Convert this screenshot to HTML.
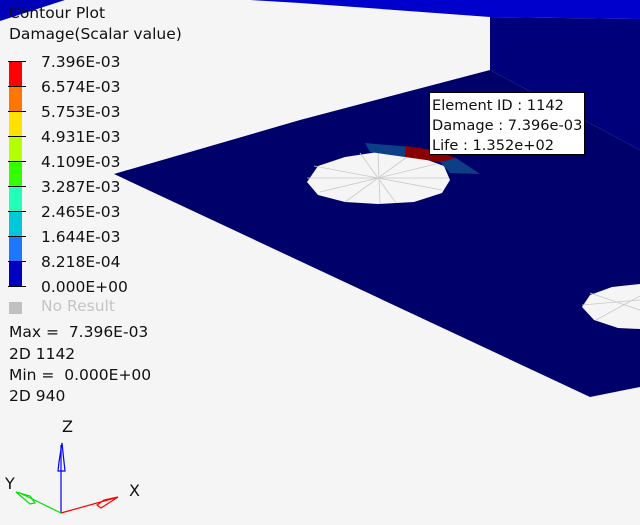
<!DOCTYPE html>
<html><head><meta charset="utf-8"><style>
html,body{margin:0;padding:0;background:#f5f5f5;width:640px;height:525px;overflow:hidden}
svg{display:block}
text{font-family:"DejaVu Sans","Liberation Sans",sans-serif;font-size:15.5px;fill:#111}
.tt{font-size:14.6px}
</style></head><body>
<svg width="640" height="525" viewBox="0 0 640 525">
<rect width="640" height="525" fill="#f5f5f5"/>
<polygon points="250,0 640,0 640,19 490,17 300,3" fill="#0000cc"/>
<polygon points="0,0 65,0 0,21" fill="#0000b8"/>
<polygon points="490,17 640,19 640,150 490,70" fill="#00007a"/>
<polygon points="114,174 300,120 490,70 640,150 640,387 590,397" fill="#00006a"/>
<polygon points="307,182 318,166 345,157 378,152 414,155 444,166 450,180 442,193 414,202 378,204 345,202 318,195" fill="#f5f5f5"/>
<g stroke="#c8c8c8" stroke-width="0.8">
<line x1="307" y1="178" x2="449" y2="178"/><line x1="360" y1="153" x2="396" y2="203"/>
<line x1="345" y1="202" x2="411" y2="154"/><line x1="314" y1="166" x2="442" y2="190"/>
<line x1="320" y1="192" x2="436" y2="164"/><line x1="378" y1="152" x2="380" y2="204"/>
</g>
<polygon points="365,143 412,147 405,157 370,152" fill="#0d3f86"/>
<polygon points="406,146 432,150 456,158 440,162 405,157" fill="#8a0000"/>
<polygon points="440,162 456,158 480,174 450,173" fill="#0d3f86"/>
<polygon points="582,307 590,295 612,287 640,284 640,329 618,328 594,320" fill="#f5f5f5"/>
<g stroke="#c8c8c8" stroke-width="0.8">
<line x1="582" y1="305" x2="640" y2="300"/><line x1="590" y1="293" x2="640" y2="310"/><line x1="596" y1="320" x2="640" y2="296"/>
</g>
<rect x="429.5" y="92.5" width="155" height="62" fill="#fff" stroke="#000"/>
<text class="tt" x="432" y="110">Element ID : 1142</text>
<text class="tt" x="432" y="130">Damage : 7.396e-03</text>
<text class="tt" x="432" y="150">Life : 1.352e+02</text>
<text x="9" y="18">Contour Plot</text>
<text x="9" y="39">Damage(Scalar value)</text>
<rect x="9" y="61" width="13" height="25" fill="#ff0000"/>
<rect x="9" y="86" width="13" height="25" fill="#ff7700"/>
<rect x="9" y="111" width="13" height="25" fill="#ffe000"/>
<rect x="9" y="136" width="13" height="25" fill="#b4ff00"/>
<rect x="9" y="161" width="13" height="25" fill="#33ff00"/>
<rect x="9" y="186" width="13" height="25" fill="#22ffbb"/>
<rect x="9" y="211" width="13" height="25" fill="#00c8d8"/>
<rect x="9" y="236" width="13" height="25" fill="#1e78ff"/>
<rect x="9" y="261" width="13" height="25" fill="#0000c0"/>
<g stroke="#000" stroke-width="1">
<line x1="8" y1="61.5" x2="26" y2="61.5"/><line x1="8" y1="86.5" x2="26" y2="86.5"/><line x1="8" y1="111.5" x2="26" y2="111.5"/>
<line x1="8" y1="136.5" x2="26" y2="136.5"/><line x1="8" y1="161.5" x2="26" y2="161.5"/><line x1="8" y1="186.5" x2="26" y2="186.5"/>
<line x1="8" y1="211.5" x2="26" y2="211.5"/><line x1="8" y1="236.5" x2="26" y2="236.5"/><line x1="8" y1="261.5" x2="26" y2="261.5"/>
<line x1="8" y1="286.5" x2="26" y2="286.5"/>
</g>
<text x="41" y="67">7.396E-03</text>
<text x="41" y="92">6.574E-03</text>
<text x="41" y="117">5.753E-03</text>
<text x="41" y="142">4.931E-03</text>
<text x="41" y="167">4.109E-03</text>
<text x="41" y="192">3.287E-03</text>
<text x="41" y="217">2.465E-03</text>
<text x="41" y="242">1.644E-03</text>
<text x="41" y="267">8.218E-04</text>
<text x="41" y="292">0.000E+00</text>
<rect x="9" y="302" width="13" height="12" fill="#c0c0c0"/>
<text x="41" y="311" style="fill:#c4c4c4">No Result</text>
<text x="9" y="337">Max =&#160; 7.396E-03</text>
<text x="9" y="359">2D 1142</text>
<text x="9" y="380">Min =&#160; 0.000E+00</text>
<text x="9" y="401">2D 940</text>
<line x1="61" y1="513" x2="61" y2="445" stroke="#0000ff" stroke-width="1.2"/>
<polygon points="62,443 59,462 58,471 65,471 64,462" fill="none" stroke="#0000ff" stroke-width="1.2"/>
<line x1="61" y1="513" x2="20" y2="493" stroke="#00e000" stroke-width="1.2"/>
<polygon points="16,492 30,496 35,503 30,504" fill="none" stroke="#00e000" stroke-width="1.2"/>
<line x1="61" y1="513" x2="115" y2="498" stroke="#ff0000" stroke-width="1.2"/>
<polygon points="118,497 104,500 97,505 101,508" fill="none" stroke="#ff0000" stroke-width="1.2"/>
<text x="62" y="432" style="font-size:16px">Z</text>
<text x="5" y="489" style="font-size:16px">Y</text>
<text x="129" y="496" style="font-size:16px">X</text>
</svg>
</body></html>
